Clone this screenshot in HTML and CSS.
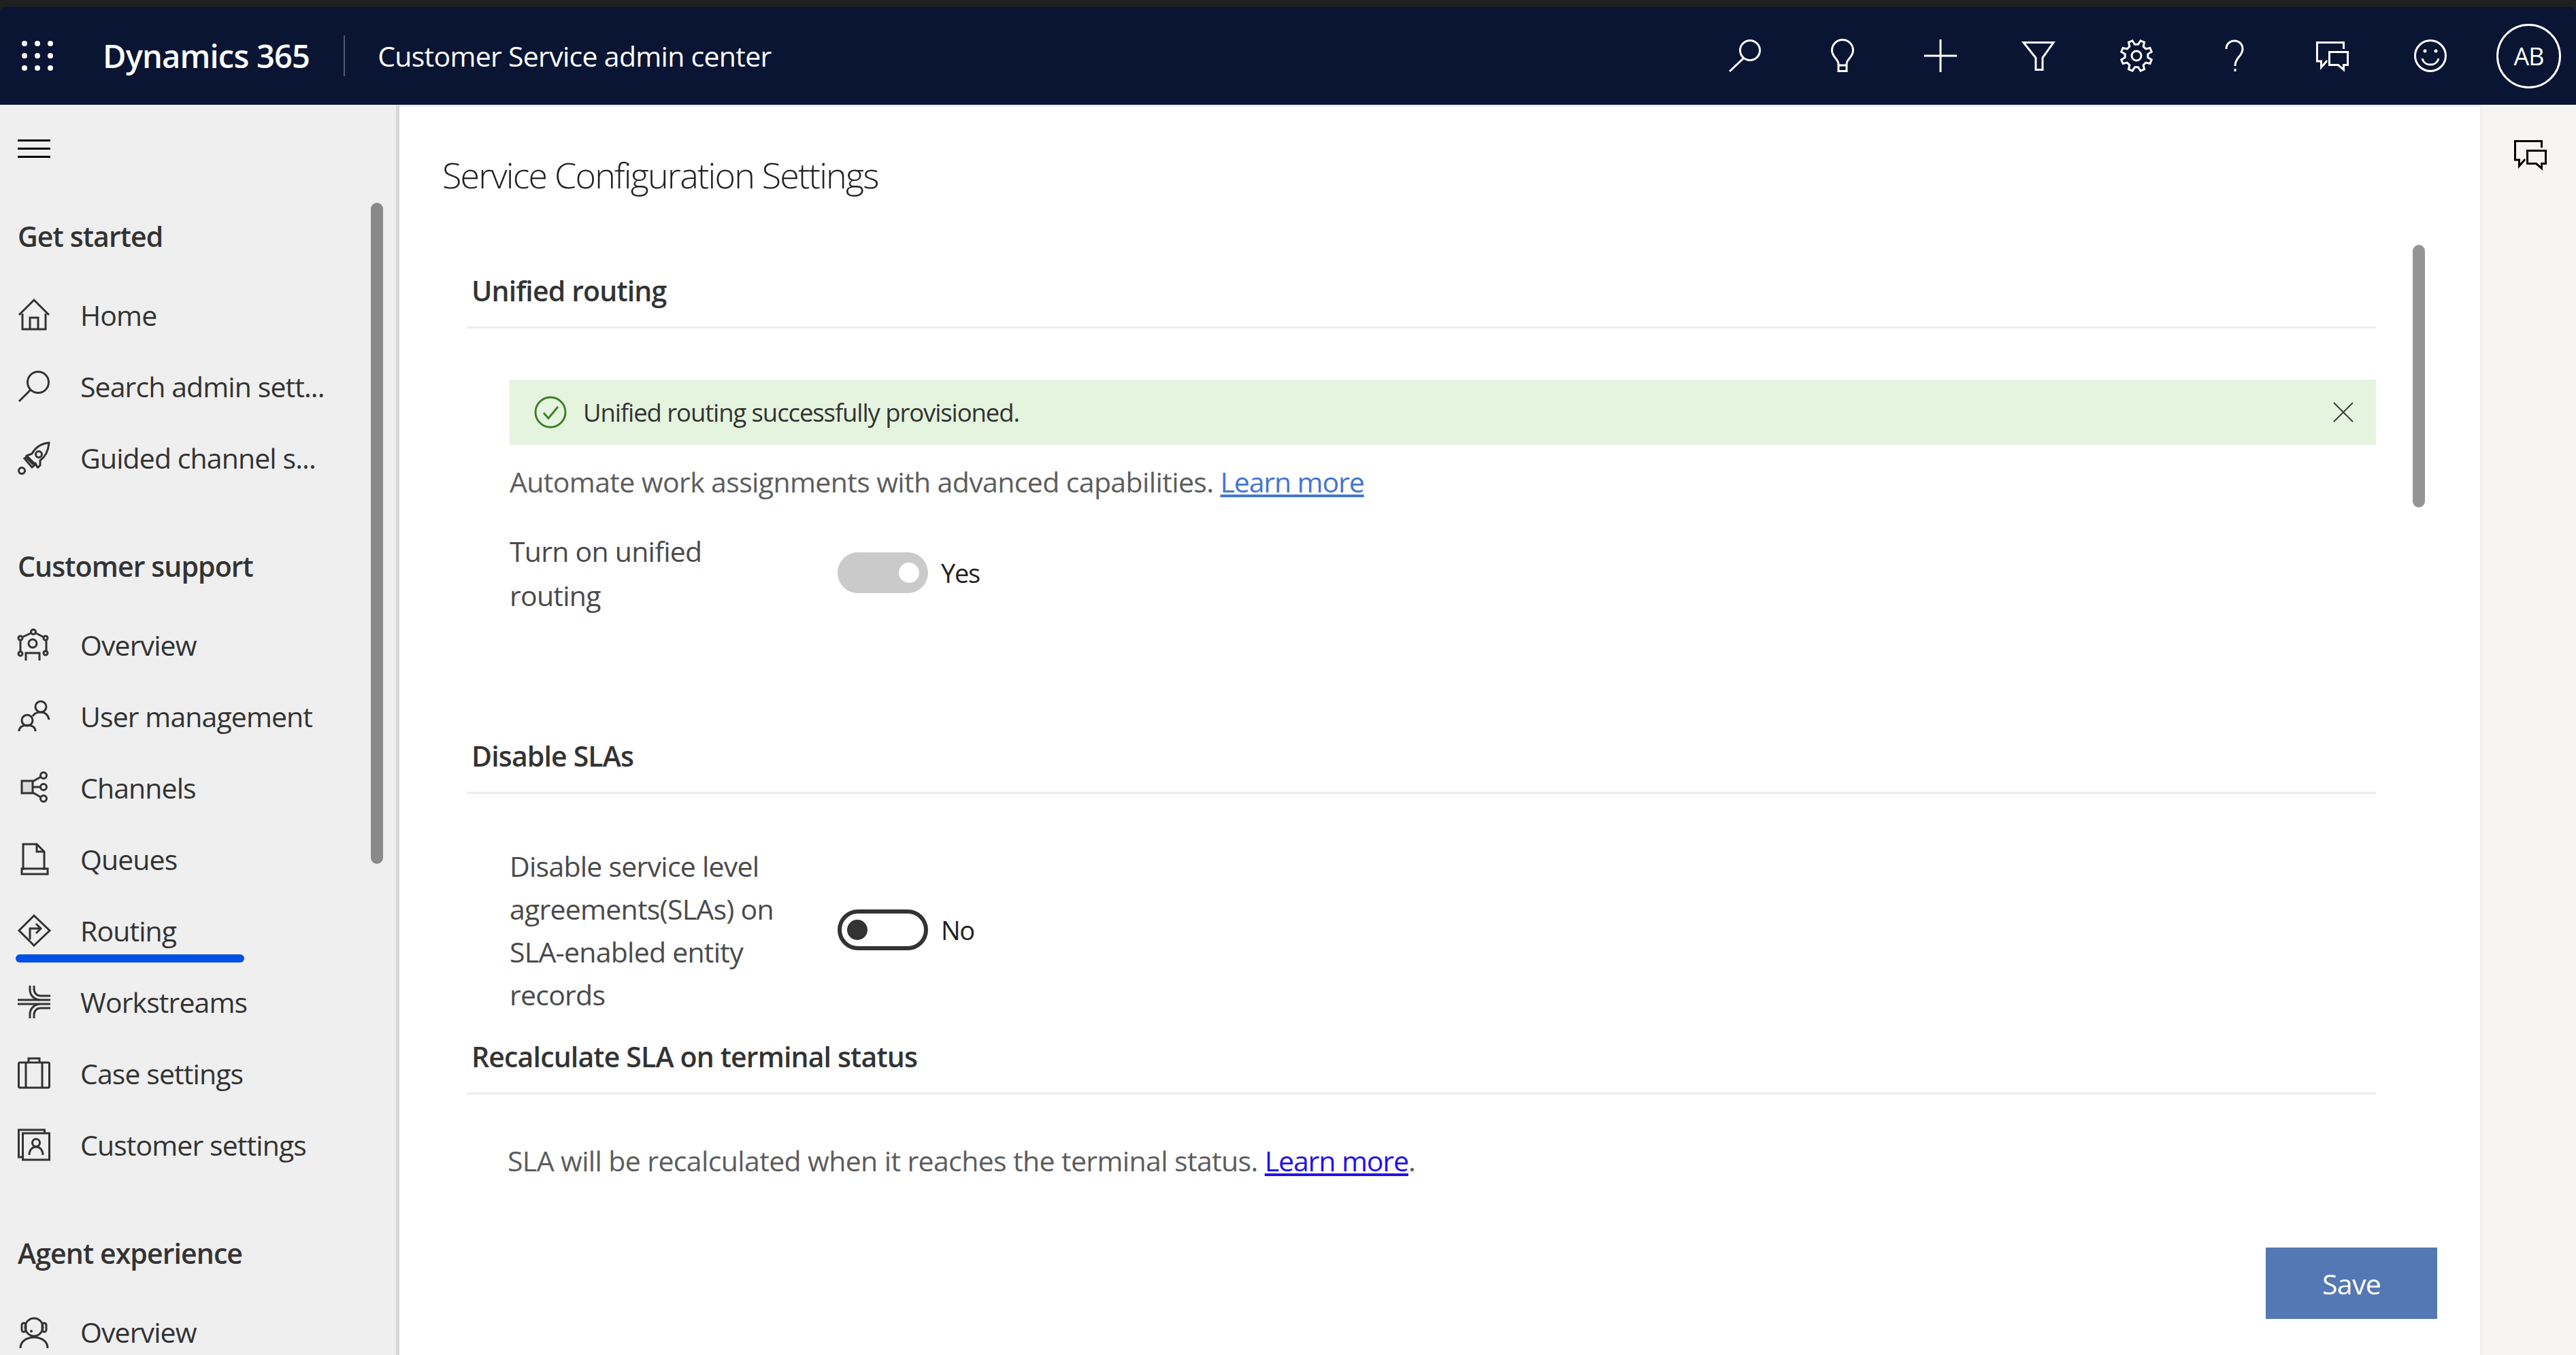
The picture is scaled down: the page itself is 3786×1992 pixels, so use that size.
FILE: index.html
```html
<!DOCTYPE html>
<html lang="en">
<head>
    <meta charset="UTF-8">
    <title>Service Configuration Settings</title>
    <link rel="stylesheet" href="styles.css">
</head>
<body>
    <div class="top-strip"></div>

    <header class="top-bar">
        <div class="waffle">
            <i></i><i></i><i></i><i></i><i></i><i></i><i></i><i></i><i></i>
        </div>
        <span class="brand">Dynamics 365</span>
        <span class="app-name">Customer Service admin center</span>

        <div class="top-icons">
            <svg class="top-icon" viewBox="0 0 48 48"><circle cx="32" cy="16" r="14.500"/><path d="M22 28 2 47"/></svg>
            <svg class="top-icon" viewBox="0 0 48 48"><path d="M18 36c0-7-9.500-10-9.500-20a15.500 15.500 0 0 1 31 0c0 10-9.500 13-9.500 20v10.500H18z"/><path d="M18 38h12"/></svg>
            <svg class="top-icon" viewBox="0 0 48 48"><path d="M24 0v48M0 24h48"/></svg>
            <svg class="top-icon" viewBox="0 0 48 48"><path d="M2 4.500h44L30 27v17.500H20V27z"/></svg>
            <svg class="top-icon" viewBox="0 0 48 48"><circle cx="24" cy="24" r="7"/><path d="M26.510 7.190 29.950 1.780 35.500 4.080 34.110 10.330 37.670 13.890 43.920 12.500 46.220 18.050 40.810 21.490V26.510L46.220 29.950 43.920 35.500 37.670 34.110 34.110 37.670 35.500 43.920 29.950 46.220 26.510 40.810H21.490L18.050 46.220 12.500 43.920 13.890 37.670 10.330 34.110 4.080 35.500 1.780 29.950 7.190 26.510V21.490L1.780 18.050 4.080 12.500 10.330 13.890 13.890 10.330 12.500 4.080 18.050 1.780 21.490 7.190z"/></svg>
            <svg class="top-icon" viewBox="0 0 48 48"><path d="M12 14c0-7 5-12 12-12s12 5 12 12c0 11-11 12-11 25"/><path d="M25 43v4"/></svg>
            <svg class="top-icon" viewBox="0 0 48 48"><path d="M40.500 14V4.500H1.500V32h6v9l8-9h1"/><path d="M19.500 18.500h27v19h-6v7l-8-7h-13z"/></svg>
            <svg class="top-icon" viewBox="0 0 48 48"><circle cx="24" cy="24" r="22.500"/><path d="M12 28c3 12 21 12 24 0"/><circle class="dot" cx="16" cy="17" r="2.500"/><circle class="dot" cx="32" cy="17" r="2.500"/></svg>
        </div>
        <div class="avatar">AB</div>
    </header>

    <div class="page">
        <nav class="sidebar">
            <div class="burger"><i></i><i></i><i></i></div>

            <h2 class="nav-head">Get started</h2>
            <a class="nav-item">
                <svg class="nav-icon" viewBox="0 0 48 48"><path d="M2 24 24 2l22 22"/><path d="M7 22v23h34V22"/><path d="M18 45V28h12v17"/></svg>
                Home
            </a>
            <a class="nav-item">
                <svg class="nav-icon" viewBox="0 0 48 48"><circle cx="30" cy="18" r="15.500"/><path d="M19 29 2 46"/></svg>
                Search admin sett...
            </a>
            <a class="nav-item">
                <svg class="nav-icon" viewBox="0 0 48 48"><path d="M46 2c-12 1-20 7-25 16l-8 3v3l9 9 4-1 3 6h1l3-3v-7c7-5 12-14 13-26z"/><circle cx="31" cy="19" r="4.500"/><path d="m10 25 4-3 12 12-5 4z"/><circle cx="6" cy="43" r="4.500"/></svg>
                Guided channel s...
            </a>

            <h2 class="nav-head nav-head-next">Customer support</h2>
            <a class="nav-item">
                <svg class="nav-icon" viewBox="0 0 48 48"><circle cx="22" cy="22" r="6"/><path d="M12 47V36h20v11"/><path d="M19 7 6 13M27 7l12 6M4 18v17M42 18v17"/><circle cx="23" cy="5" r="3.500"/><circle cx="4" cy="14" r="3"/><circle cx="41" cy="14" r="3"/><circle cx="4" cy="37" r="3"/><circle cx="41" cy="36" r="3"/></svg>
                Overview
            </a>
            <a class="nav-item">
                <svg class="nav-icon" viewBox="0 0 48 48"><circle cx="34" cy="10" r="8"/><circle cx="14" cy="30" r="8"/><path d="M22 24c2-4 7-6 12-6 6 0 11 4 12 11"/><path d="M2 46c0-6 5-9 12-9s12 3 12 9"/></svg>
                User management
            </a>
            <a class="nav-item">
                <svg class="nav-icon" viewBox="0 0 48 48"><rect class="fill" x="6" y="14" width="16" height="18"/><circle cx="38" cy="6" r="4.500"/><circle cx="38" cy="23" r="4.500"/><circle cx="38" cy="40" r="4.500"/><path d="m22 15 12-7M22 23h12M22 31l12 7"/></svg>
                Channels
            </a>
            <a class="nav-item">
                <svg class="nav-icon" viewBox="0 0 48 48"><path d="M8 40V2h20l11 11v27"/><path d="M28 2v11h11"/><path d="M6 38v8h38v-8z"/></svg>
                Queues
            </a>
            <a class="nav-item nav-item-active">
                <svg class="nav-icon" viewBox="0 0 48 48"><path d="M24 2 47 24 24 46 2 24z"/><path d="M18 37V21h16"/><path d="m27 14 7 7-7 7"/></svg>
                Routing
            </a>
            <a class="nav-item">
                <svg class="nav-icon" viewBox="0 0 48 48"><path d="M0 21h48M0 27h48"/><path d="M18 0v6c0 8 6 14 14 15"/><path d="M24 0v5c0 6 4 10 10 10h14"/><path d="M18 48v-6c0-8 6-14 14-15"/><path d="M24 48v-5c0-6 4-10 10-10h14"/></svg>
                Workstreams
            </a>
            <a class="nav-item">
                <svg class="nav-icon" viewBox="0 0 48 48"><rect x="1.500" y="8" width="45" height="37" rx="2"/><path d="M12 8v37M36 8v37M16 8V2h16v6"/></svg>
                Case settings
            </a>
            <a class="nav-item">
                <svg class="nav-icon" viewBox="0 0 48 48"><path d="M6 42H1.500V2h38v4"/><rect x="7.500" y="7" width="39" height="39"/><circle cx="27" cy="21" r="5.500"/><path d="M17 39c0-7 4-12 10-12s10 5 10 12"/></svg>
                Customer settings
            </a>

            <h2 class="nav-head nav-head-next">Agent experience</h2>
            <a class="nav-item">
                <svg class="nav-icon" viewBox="0 0 48 48"><circle cx="24" cy="17" r="13"/><rect x="6" y="11" width="6" height="13" rx="3"/><rect x="36" y="11" width="6" height="13" rx="3"/><circle class="dot" cx="20" cy="23" r="2"/><path d="M4 48c0-10 9-16 20-16s20 6 20 16"/></svg>
                Overview
            </a>

            <div class="nav-scroll"></div>
        </nav>

        <main class="content">
            <h1 class="page-title">Service Configuration Settings</h1>

            <div class="sections">
                <section class="section section-routing">
                    <h3 class="section-head">Unified routing</h3>
                    <div class="section-body">
                        <div class="banner">
                            <svg class="banner-check" viewBox="0 0 48 48"><circle cx="24" cy="24" r="22"/><path d="m14 25 7 8 14-17"/></svg>
                            <span class="banner-text">Unified routing successfully provisioned.</span>
                            <svg class="banner-close" viewBox="0 0 30 30"><path d="M1 1l28 28M29 1 1 29"/></svg>
                        </div>
                        <p class="hint hint-routing">Automate work assignments with advanced capabilities. <a class="link">Learn more</a></p>
                        <div class="setting setting-routing">
                            <div class="setting-label">Turn on unified routing</div>
                            <div class="toggle toggle-on"><i></i></div>
                            <span class="toggle-text">Yes</span>
                        </div>
                    </div>
                </section>

                <section class="section section-slas">
                    <h3 class="section-head">Disable SLAs</h3>
                    <div class="section-body">
                        <div class="setting setting-slas">
                            <div class="setting-label">Disable service level agreements(SLAs) on SLA-enabled entity records</div>
                            <div class="toggle toggle-off"><i></i></div>
                            <span class="toggle-text">No</span>
                        </div>
                    </div>
                </section>

                <section class="section section-recalc">
                    <h3 class="section-head">Recalculate SLA on terminal status</h3>
                    <div class="section-body">
                        <p class="hint hint-recalc">SLA will be recalculated when it reaches the terminal status. <a class="link link-plain">Learn more</a>.</p>
                    </div>
                </section>
            </div>

            <div class="actions"><button class="save-btn">Save</button></div>

            <div class="content-scroll"></div>
        </main>

        <aside class="rail">
            <svg class="rail-icon" viewBox="0 0 48 48"><path d="M40.500 14V4.500H1.500V32h6v9l8-9h1"/><path d="M19.500 18.500h27v19h-6v7l-8-7h-13z"/></svg>
        </aside>
    </div>
</body>
</html>
```
FILE: styles.css
```css
* {
    margin: 0;
    padding: 0;
    box-sizing: border-box;
}

html, body {
    height: 100%;
    overflow: hidden;
}

body {
    display: flex;
    flex-direction: column;
    background-color: #1f1f1f;
    color: #333333;
    font-family: "Open Sans", "Noto Sans", sans-serif;
}

.top-strip {
    height: 10px;
    flex-shrink: 0;
}

/* Header */
.top-bar {
    height: 144px;
    flex-shrink: 0;
    display: flex;
    align-items: center;
    background-color: #0a1533;
    border-radius: 8px 8px 0 0;
    color: #ffffff;
}

.waffle {
    width: 46px;
    margin-left: 32px;
    display: grid;
    grid-template-columns: repeat(3, 8px);
    grid-auto-rows: 8px;
    justify-content: space-between;
    row-gap: 10px;
}

.waffle i {
    background-color: #ffffff;
    border-radius: 50%;
}

.brand {
    margin-left: 73px;
    font-size: 47px;
    font-weight: 600;
    letter-spacing: -0.8px;
    line-height: 60px;
}

.app-name {
    margin-left: 50px;
    padding-left: 48px;
    border-left: 2px solid #4d5a75;
    font-size: 41px;
    letter-spacing: -0.7px;
    line-height: 60px;
}

.top-icons {
    margin-left: auto;
    display: flex;
    gap: 96px;
}

.top-icon {
    width: 48px;
    height: 48px;
    fill: none;
    stroke: #ffffff;
    stroke-width: 3;
    overflow: visible;
}

.top-icon .dot {
    fill: #ffffff;
    stroke: none;
}

.avatar {
    width: 95px;
    height: 95px;
    margin: 0 22px 0 73px;
    border: 3px solid #ffffff;
    border-radius: 50%;
    display: flex;
    align-items: center;
    justify-content: center;
    font-size: 36px;
    letter-spacing: -1px;
}

/* Page columns */
.page {
    flex: 1;
    min-height: 0;
    display: flex;
    background-color: #eeeeee;
    padding-top: 3px;
}

.sidebar {
    width: 587px;
    flex-shrink: 0;
    position: relative;
    margin-top: -3px;
    overflow: hidden;
    background-color: #efefef;
    border-right: 5px solid #d8d8d8;
    padding-top: 51px;
}

.burger {
    width: 48px;
    margin-left: 26px;
    display: flex;
    flex-direction: column;
    gap: 9px;
}

.burger i {
    height: 3px;
    background-color: #000000;
}

.nav-head {
    margin: 87px 0 35px 26px;
    font-size: 41px;
    font-weight: 600;
    letter-spacing: -0.9px;
    line-height: 56px;
    color: #333333;
}

.nav-head-next {
    margin-top: 79px;
}

.nav-item {
    height: 105px;
    position: relative;
    display: flex;
    align-items: center;
    gap: 44px;
    padding-left: 26px;
    font-size: 41px;
    letter-spacing: -0.9px;
    color: #333333;
}

.nav-icon {
    width: 48px;
    height: 48px;
    flex-shrink: 0;
    fill: none;
    stroke: #333333;
    stroke-width: 3;
    overflow: visible;
}

.nav-icon .fill {
    fill: #dcdcdc;
}

.nav-icon .dot {
    fill: #333333;
    stroke: none;
}

.nav-item-active::after {
    content: "";
    position: absolute;
    left: 23px;
    top: 88px;
    width: 336px;
    height: 12px;
    border-radius: 6px;
    background-color: #0350e6;
}

.nav-scroll {
    position: absolute;
    left: 545px;
    top: 144px;
    width: 18px;
    height: 972px;
    border-radius: 9px;
    background-color: #8a8a8a;
}

/* Main content */
.content {
    flex: 1;
    min-width: 0;
    position: relative;
    display: flex;
    flex-direction: column;
    background-color: #ffffff;
    padding-top: 65px;
}

.page-title {
    margin-left: 63px;
    font-size: 52px;
    font-weight: 300;
    letter-spacing: -1.82px;
    line-height: 70px;
    color: #222222;
}

.sections {
    width: 2806px;
    margin-left: 99px;
}

.section-routing {
    margin-top: 105px;
}

.section-slas {
    margin-top: 173px;
}

.section-recalc {
    margin-top: 29px;
}

.section-head {
    height: 86px;
    padding: 0 0 26px 7px;
    border-bottom: 3px solid #ececec;
    font-size: 41px;
    font-weight: 600;
    letter-spacing: -0.85px;
    line-height: 60px;
    color: #333333;
}

.section-body {
    padding-left: 63px;
}

.banner {
    height: 96px;
    margin-top: 75px;
    display: flex;
    align-items: center;
    background-color: #e5f4df;
    padding-left: 36px;
}

.banner-check {
    width: 48px;
    height: 48px;
    fill: none;
    stroke: #3f7f2a;
    stroke-width: 3;
}

.banner-text {
    margin-left: 24px;
    font-size: 36.500px;
    letter-spacing: -1.1px;
    color: #333333;
}

.banner-close {
    width: 30px;
    height: 30px;
    margin-left: auto;
    margin-right: 33px;
    fill: none;
    stroke: #3d3d3d;
    stroke-width: 2;
}

.hint {
    font-size: 41px;
    letter-spacing: -0.62px;
    line-height: 60px;
    color: #5c5c5c;
}

.hint-routing {
    margin-top: 24px;
}

.hint-recalc {
    margin-top: 67px;
    margin-left: -3px;
}

.link {
    color: #4475d1;
    letter-spacing: -1.1px;
    text-decoration: underline;
}

.link-plain {
    color: #2410e8;
}

.setting {
    display: flex;
    align-items: center;
}

.setting-routing {
    margin-top: 40px;
}

.setting-routing .setting-label {
    line-height: 65px;
}

.setting-slas {
    margin-top: 75px;
}

.setting-label {
    width: 420px;
    margin-right: 62px;
    font-size: 41px;
    letter-spacing: -0.75px;
    line-height: 63px;
    color: #4a4a4a;
}

.toggle {
    width: 133px;
    height: 60px;
    margin-bottom: 2px;
    display: flex;
    align-items: center;
    border-radius: 30px;
}

.toggle i {
    width: 30px;
    height: 30px;
    border-radius: 50%;
}

.toggle-on {
    justify-content: flex-end;
    background-color: #cacaca;
    padding-right: 13px;
}

.toggle-on i {
    background-color: #ffffff;
}

.toggle-off {
    border: 6px solid #333333;
    padding-left: 8px;
}

.toggle-off i {
    background-color: #333333;
}

.toggle-text {
    margin: 0 0 2px 19px;
    font-size: 38px;
    letter-spacing: -1.3px;
    color: #222222;
}

.actions {
    margin-top: auto;
    padding: 0 63px 53px 0;
    display: flex;
    justify-content: flex-end;
}

.save-btn {
    width: 252px;
    height: 105px;
    border: none;
    background-color: #5478b3;
    color: #ffffff;
    font-family: inherit;
    font-size: 41px;
    letter-spacing: -0.7px;
}

.content-scroll {
    position: absolute;
    left: 2959px;
    top: 203px;
    width: 18px;
    height: 386px;
    border-radius: 9px;
    background-color: #949494;
}

.rail {
    width: 141px;
    flex-shrink: 0;
    margin-top: -3px;
    background-color: #f6f5f3;
    border-left: 3px solid #efefef;
    padding: 49px 0 0 47px;
}

.rail-icon {
    display: block;
    width: 48px;
    height: 48px;
    fill: none;
    stroke: #000000;
    stroke-width: 3;
    overflow: visible;
}
```
